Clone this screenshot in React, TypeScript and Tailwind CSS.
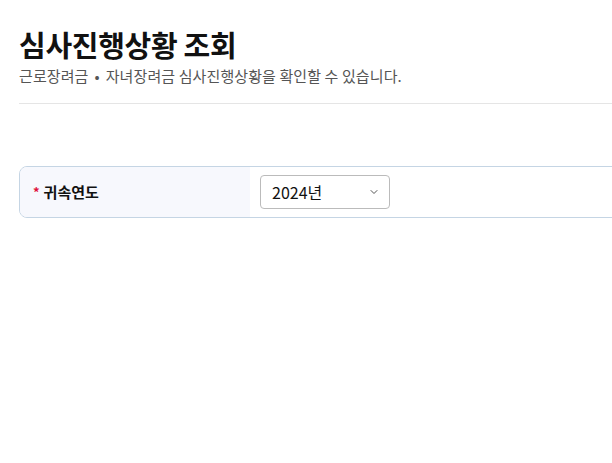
import { ChevronDown } from "lucide-react";

export default function App() {
  return (
    <div
      className="w-full h-[463px] overflow-hidden bg-white text-[#111]"
      style={{ fontFamily: '"Noto Sans CJK KR", "Noto Sans", sans-serif' }}
    >
      <div className="w-[900px] pl-[19px] pt-[24px]">
        {/* Title */}
        <div className="pb-[17px] border-b border-[#e5e5e5]">
          <h1 className="text-[29px] leading-[40px] font-bold tracking-[-0.3px]">심사진행상황 조회</h1>
          <p className="mt-[2px] text-[15px] leading-[20px] text-[#555] tracking-[0.1px]">
            근로장려금<span className="mx-[6px]">•</span>자녀장려금 심사진행상황을 확인할 수 있습니다.
          </p>
        </div>

        {/* Search form */}
        <div className="mt-[62px] flex h-[52px] rounded-[8px] border border-[#c5d5e4] overflow-hidden">
          <div className="w-[230px] bg-[#f7f8fd] flex items-center pl-[13px] gap-[4px]">
            <span className="text-[#e0103a] text-[13px] font-bold">*</span>
            <span className="text-[15px] font-bold">귀속연도</span>
          </div>
          <div className="flex items-center pl-[10px]">
            <div className="w-[130px] h-[34px] rounded-[4px] border border-[#bbb] flex items-center justify-between pl-[11px] pr-[9px]">
              <span className="text-[16px]">2024년</span>
              <ChevronDown size={12} strokeWidth={2} className="text-[#555]" />
            </div>
          </div>
        </div>
      </div>
    </div>
  );
}
